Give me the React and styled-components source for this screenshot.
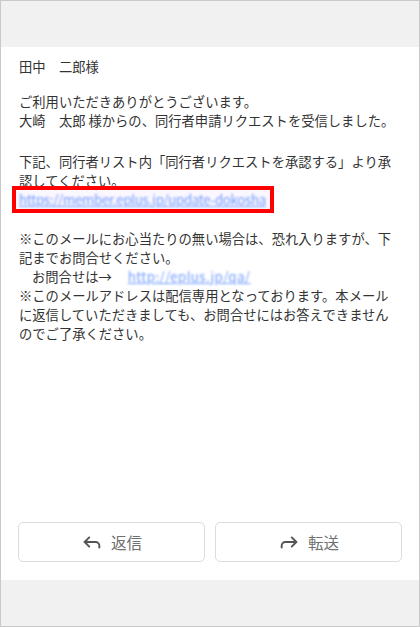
import React from "react";
import styled, { createGlobalStyle } from "styled-components";

const GlobalStyle = createGlobalStyle`
  html, body {
    margin: 0;
    padding: 0;
  }
  body {
    font-family: "Noto Sans CJK JP", "Noto Sans", sans-serif;
  }
`;

const Frame = styled.div`
  width: 420px;
  height: 627px;
  box-sizing: border-box;
  border: 1px solid #c9c9c9;
  background: #f1f1f1;
  display: flex;
  flex-direction: column;
`;

const Band = styled.div`
  height: 46px;
  flex-shrink: 0;
`;

const Mail = styled.div`
  flex: 1;
  background: #fff;
  display: flex;
  flex-direction: column;
  padding: 10px 17px 18px 17px;
`;

const Body = styled.div`
  flex: 1;
  padding-left: 1px;
  font-size: 13.3px;
  line-height: 19px;
  color: #333;
`;

const Para = styled.p`
  margin: ${(p) => p.$gap || 0}px 0 0;
`;

const LinkBox = styled.span`
  display: inline-block;
  margin-left: -3px;
  padding: 0 4px 0 3px;
  outline: 4px solid #ff0000;
  background: #fbf7ff;
`;

const Link = styled.a`
  color: #6f9bff;
  text-decoration: underline;
  letter-spacing: ${(p) => p.$spacing || 0}px;
  filter: blur(0.9px);
`;

const Indent = styled.span`
  padding-left: 13px;
`;

const QaLink = styled(Link)`
  margin-left: 16px;
`;

const Actions = styled.div`
  display: grid;
  grid-template-columns: 1fr 1fr;
  gap: 10px;
`;

const Button = styled.button`
  height: 40px;
  border: 1px solid #dcdcdc;
  border-radius: 5px;
  background: #fff;
  display: flex;
  align-items: center;
  justify-content: center;
  gap: 8px;
  font-family: inherit;
  font-size: 15.5px;
  color: #707070;
  padding: 0;
  svg {
    width: 22px;
    height: 22px;
    stroke: #555;
    stroke-width: 2.1;
    fill: none;
    stroke-linecap: round;
    stroke-linejoin: round;
  }
`;

const ReplyIcon = () => (
  <svg viewBox="0 0 24 24">
    <polyline points="9 17 4 12 9 7" />
    <path d="M20 18v-2a4 4 0 0 0-4-4H4" />
  </svg>
);

const ForwardIcon = () => (
  <svg viewBox="0 0 24 24">
    <polyline points="15 17 20 12 15 7" />
    <path d="M4 18v-2a4 4 0 0 1 4-4h12" />
  </svg>
);

export default function App() {
  return (
    <>
      <GlobalStyle />
      <Frame>
        <Band />
        <Mail>
          <Body>
            <Para>田中　二郎様</Para>
            <Para $gap={16}>
              ご利用いただきありがとうございます。
              <br />
              大崎　太郎 様からの、同行者申請リクエストを受信しました。
            </Para>
            <Para $gap={22}>
              下記、同行者リスト内「同行者リクエストを承認する」より承
              <br />
              認してください。
              <br />
              <LinkBox>
                <Link href="#" $spacing={-0.3}>
                  https://member.eplus.jp/update-dokosha
                </Link>
              </LinkBox>
            </Para>
            <Para $gap={20}>
              ※このメールにお心当たりの無い場合は、恐れ入りますが、下
              <br />
              記までお問合せください。
              <br />
              <Indent>お問合せは→</Indent>
              <QaLink href="#" $spacing={0.4}>
                http://eplus.jp/qa/
              </QaLink>
              <br />
              ※このメールアドレスは配信専用となっております。本メール
              <br />
              に返信していただきましても、お問合せにはお答えできません
              <br />
              のでご了承ください。
            </Para>
          </Body>
          <Actions>
            <Button>
              <ReplyIcon />
              返信
            </Button>
            <Button>
              <ForwardIcon />
              転送
            </Button>
          </Actions>
        </Mail>
        <Band />
      </Frame>
    </>
  );
}
